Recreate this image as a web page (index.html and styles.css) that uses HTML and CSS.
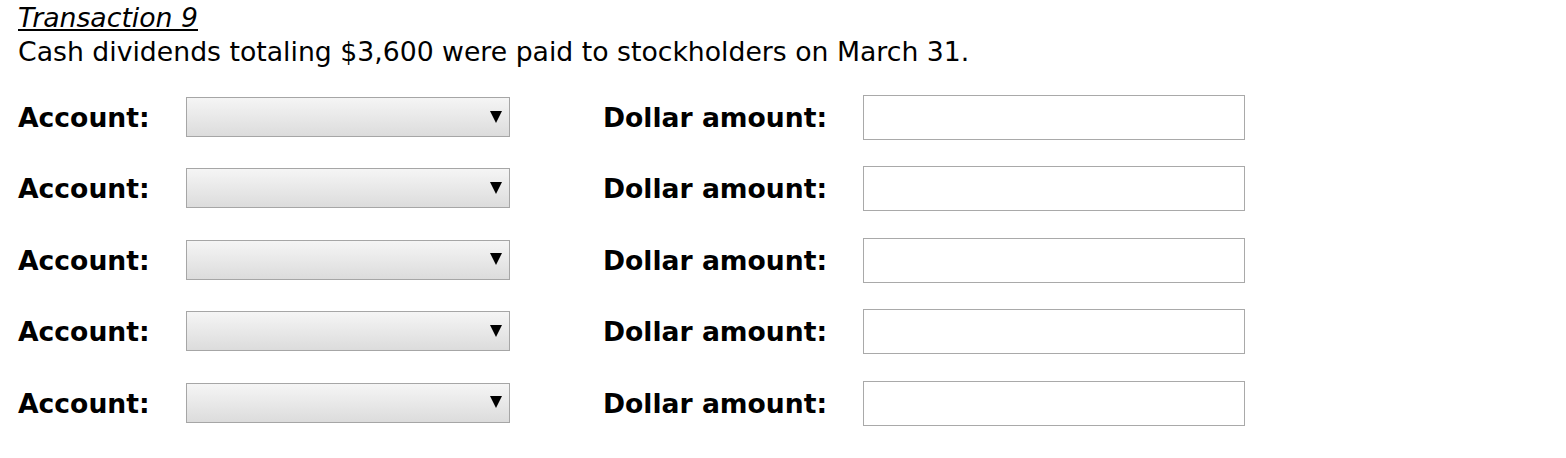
FILE: index.html
```html
<!DOCTYPE html>
<html>
<head>
<meta charset="utf-8">
<link rel="stylesheet" href="styles.css">
</head>
<body>
<div class="page">
  <div class="intro">
    <div class="title">Transaction 9</div>
    <div class="desc">Cash dividends totaling $3,600 were paid to stockholders on March 31.</div>
  </div>
  <div class="rows">
    <div class="row">
      <div class="label acct">Account:</div>
      <div class="select"><svg width="12" height="12" viewBox="0 0 12 12"><polygon points="0,0 12,0 6,12" fill="#000"/></svg></div>
      <div class="label amt">Dollar amount:</div>
      <div class="input"></div>
    </div>
    <div class="row">
      <div class="label acct">Account:</div>
      <div class="select"><svg width="12" height="12" viewBox="0 0 12 12"><polygon points="0,0 12,0 6,12" fill="#000"/></svg></div>
      <div class="label amt">Dollar amount:</div>
      <div class="input"></div>
    </div>
    <div class="row">
      <div class="label acct">Account:</div>
      <div class="select"><svg width="12" height="12" viewBox="0 0 12 12"><polygon points="0,0 12,0 6,12" fill="#000"/></svg></div>
      <div class="label amt">Dollar amount:</div>
      <div class="input"></div>
    </div>
    <div class="row">
      <div class="label acct">Account:</div>
      <div class="select"><svg width="12" height="12" viewBox="0 0 12 12"><polygon points="0,0 12,0 6,12" fill="#000"/></svg></div>
      <div class="label amt">Dollar amount:</div>
      <div class="input"></div>
    </div>
    <div class="row">
      <div class="label acct">Account:</div>
      <div class="select"><svg width="12" height="12" viewBox="0 0 12 12"><polygon points="0,0 12,0 6,12" fill="#000"/></svg></div>
      <div class="label amt">Dollar amount:</div>
      <div class="input"></div>
    </div>
  </div>
</div>
</body>
</html>
```
FILE: styles.css
```css
html, body {
  margin: 0;
  padding: 0;
  background: #fff;
}
.page {
  padding: 1px 18px 0;
  font-family: "DejaVu Sans", Verdana, sans-serif;
  color: #000;
}
.intro {
  font-size: 26.7px;
  line-height: 34px;
}
.title {
  font-style: italic;
  text-decoration: underline;
}
.rows {
  margin-top: 26px;
  display: flex;
  flex-direction: column;
  gap: 26.4px;
}
.row {
  display: flex;
  align-items: center;
  height: 45px;
}
.label {
  font-weight: bold;
  font-size: 26.6px;
  white-space: nowrap;
}
.acct {
  width: 168px;
}
.amt {
  width: 260px;
}
.select {
  box-sizing: border-box;
  width: 324px;
  height: 40px;
  margin-right: 93px;
  margin-bottom: 1px;
  border: 1px solid #a6a6a6;
  background: linear-gradient(#f5f5f5, #dcdcdc);
  display: flex;
  align-items: center;
  justify-content: flex-end;
  padding-right: 7px;
}
.select svg {
  display: block;
  margin-top: -1px;
}
.input {
  box-sizing: border-box;
  width: 382px;
  height: 45px;
  border: 1px solid #a9a9a9;
  background: #fff;
}
```
